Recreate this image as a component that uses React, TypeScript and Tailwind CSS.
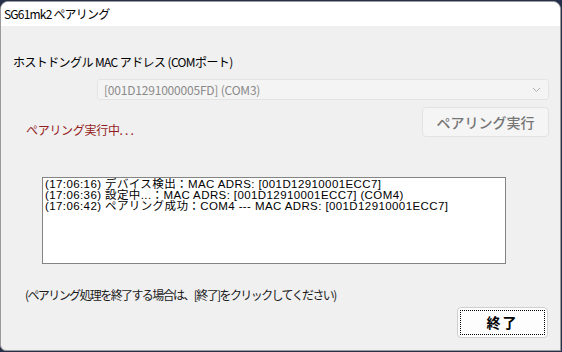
export default function App() {
  const logs = [
    "(17:06:16) デバイス検出：MAC ADRS: [001D12910001ECC7]",
    "(17:06:36) 設定中...：MAC ADRS: [001D12910001ECC7] (COM4)",
    "(17:06:42) ペアリング成功：COM4 --- MAC ADRS: [001D12910001ECC7]",
  ];

  return (
    <div className="w-[562px] h-[352px] bg-[#26304a] pt-px overflow-hidden" style={{ fontFamily: '"Noto Sans CJK JP", "Noto Sans", sans-serif' }}>
      <div className="w-[561px] h-[350px] rounded-t-[8px] rounded-bl-[6px] border border-[#9a9a9a] bg-[#f0f0f0] overflow-hidden flex flex-col">
        {/* Title bar */}
        <div className="h-[24px] bg-white flex items-center pl-[3px] text-[12px] text-black tracking-[-0.8px]">
          SG61mk2 ペアリング
        </div>

        {/* Body */}
        <div className="flex-1 flex flex-col text-[12px] text-black">
          <div className="pl-[12px] mt-[28px] leading-[16px] tracking-[-0.6px]">
            ホストドングル MAC アドレス (COMポート)
          </div>

          <div className="ml-[96px] mr-[11px] mt-[9px] h-[21px] rounded-[3px] border border-[#e3e3e3] bg-[#f4f4f4] flex items-center justify-between pl-[6px] pr-[6px]">
            <span className="text-[#8a8a8a] text-[12px] tracking-[-0.2px]">[001D1291000005FD] (COM3)</span>
            <svg width="9" height="6" viewBox="0 0 9 6" className="mr-[1px]">
              <path d="M1 1 L4.5 4.5 L8 1" fill="none" stroke="#b0b0b0" strokeWidth="1" />
            </svg>
          </div>

          <div className="flex items-center justify-between mt-[6px] mr-[11px]">
            <span className="pl-[25px] text-[#951c1c] leading-[16px] tracking-[-0.3px] mt-[16px]">
              ペアリング実行中. . .
            </span>
            <div className="w-[127px] h-[30px] rounded-[4px] border border-[#e2e2e2] bg-[#f5f5f5] flex items-center justify-center text-[14px] text-[#767676] font-medium">
              ペアリング実行
            </div>
          </div>

          <div
            className="ml-[41px] mt-[39px] w-[464px] h-[87px] bg-white border border-[#848484] pl-[2px] pt-[1px] text-[11.5px] leading-[11px] tracking-[0.4px]"
            style={{ fontFamily: '"Liberation Sans", "Noto Sans CJK JP", sans-serif' }}
          >
            {logs.map((l, i) => (
              <div key={i} className="whitespace-nowrap h-[11px]">{l}</div>
            ))}
          </div>

          <div className="pl-[24px] mt-[23px] leading-[16px] tracking-[-1.6px] text-[#1a1a1a]">
            (ペアリング処理を終了する場合は、[終了]をクリックしてください)
          </div>

          <div className="flex justify-end mr-[12px] mt-[4px]">
            <div className="w-[91px] h-[31px] rounded-[4px] border border-[#cfcfcf] bg-[#fdfdfd] p-[2px]">
              <div className="w-full h-full border border-dotted border-black flex items-center justify-center text-[14px] font-bold text-black tracking-[2px]">
                終了
              </div>
            </div>
          </div>
        </div>
      </div>
    </div>
  );
}
